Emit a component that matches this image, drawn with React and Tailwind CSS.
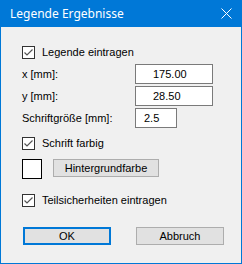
import React from 'react';

const Check = () => (
  <div className="w-[13px] h-[13px] border border-[#333333] bg-white flex items-center justify-center shrink-0">
    <svg width="11" height="11" viewBox="0 0 11 11">
      <polyline points="1.5,5.5 4,8 9.5,2.5" fill="none" stroke="#555555" strokeWidth="1.2" />
    </svg>
  </div>
);

const CheckRow = ({ label, className = '' }) => (
  <div className={`flex items-center h-[13px] ${className}`}>
    <Check />
    <span className="ml-[7px] leading-none">{label}</span>
  </div>
);

const Field = ({ label, value, width, pad, className = '' }) => (
  <div className={`flex items-center h-[20px] ${className}`}>
    <span className="w-[113px] leading-none">{label}</span>
    <div
      className={`h-[20px] ${width} ${pad} border border-[#7a7a7a] bg-white flex items-center leading-none`}
    >
      {value}
    </div>
  </div>
);

export default function App() {
  return (
    <div
      className="w-[242px] h-[264px] bg-[#f0f0f0] border-x border-b border-[#0078d7] flex flex-col text-[11px] text-black"
      style={{ fontFamily: '"Liberation Sans", Arial, sans-serif' }}
    >
      {/* title bar */}
      <div className="h-[27px] bg-[#0078d7] -mx-px flex items-center justify-between pl-[10px] pr-[10px] shrink-0">
        <span
          className="text-white text-[12px] leading-none"
          style={{ fontFamily: '"Noto Sans", "Open Sans", sans-serif' }}
        >
          Legende Ergebnisse
        </span>
        <svg width="11" height="11" viewBox="0 0 11 11">
          <path d="M0.5 0.5 L10.5 10.5 M10.5 0.5 L0.5 10.5" stroke="#ffffff" strokeWidth="1" />
        </svg>
      </div>

      {/* body */}
      <div className="flex flex-col pl-[21px] pt-[19px]">
        <CheckRow label="Legende eintragen" />

        <Field label="x [mm]:" value="175.00" width="w-[78px]" pad="pl-[17px]" className="mt-[5px]" />
        <Field label="y [mm]:" value="28.50" width="w-[78px]" pad="pl-[17px]" className="mt-[2px]" />
        <Field label="Schriftgröße [mm]:" value="2.5" width="w-[42px]" pad="pl-[8px]" className="mt-[2px]" />

        <CheckRow label="Schrift farbig" className="mt-[9px]" />

        <div className="flex items-start mt-[9px]">
          <div className="w-[20px] h-[20px] border border-black bg-white" />
          <button className="ml-[11px] w-[106px] h-[18px] border border-[#adadad] bg-[#e1e1e1] leading-none">
            Hintergrundfarbe
          </button>
        </div>

        <CheckRow label="Teilsicherheiten eintragen" className="mt-[15px]" />

        <div className="flex mt-[20px] ml-px">
          <button className="w-[88px] h-[18px] border-2 border-[#0078d7] bg-[#e1e1e1] leading-none">
            OK
          </button>
          <button className="ml-[25px] w-[88px] h-[18px] border border-[#adadad] bg-[#e1e1e1] leading-none">
            Abbruch
          </button>
        </div>
      </div>
    </div>
  );
}
